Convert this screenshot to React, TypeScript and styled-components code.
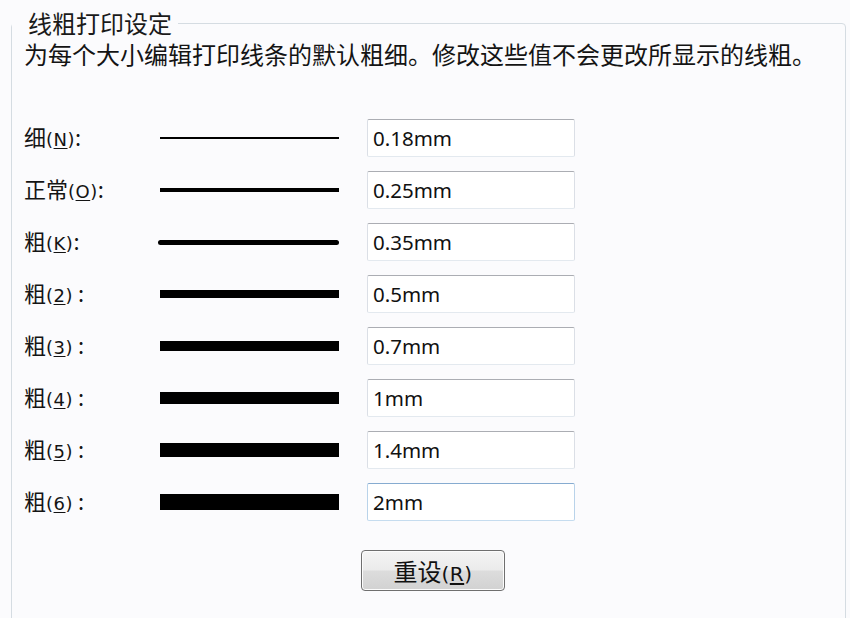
import styled, { createGlobalStyle } from "styled-components";

const GlobalStyle = createGlobalStyle`
  html, body {
    margin: 0;
    padding: 0;
    background: #fbfbfd;
  }
  body {
    font-family: "Noto Sans CJK SC", "Noto Sans", sans-serif;
    color: #141414;
  }
`;

const Page = styled.div`
  box-sizing: border-box;
  width: 850px;
  height: 618px;
  padding: 9px 0 0 11px;
  overflow: hidden;
`;

const Group = styled.fieldset`
  box-sizing: border-box;
  width: 835px;
  height: 700px;
  margin: 0;
  padding: 0 0 0 12px;
  border: 1px solid #d5dce2;
  border-radius: 4px;
`;

const Legend = styled.legend`
  margin-left: -12px;
  padding: 0 6px 0 16px;
  font-size: 24px;
  line-height: 28px;
  color: #1a1a1a;
`;

const Description = styled.p`
  margin: 4px 0 0;
  font-size: 24px;
  line-height: 26px;
  white-space: nowrap;
`;

const Rows = styled.div`
  display: flex;
  flex-direction: column;
  gap: 14px;
  margin-top: 52px;
`;

const Row = styled.div`
  display: flex;
  align-items: center;
  height: 38px;
`;

const Label = styled.label`
  width: 136px;
  font-size: 22px;
  line-height: 38px;
  white-space: nowrap;
`;

const Key = styled.span<{ $size?: number }>`
  font-family: "DejaVu Sans", sans-serif;
  font-size: ${(p) => p.$size ?? 18}px;
  letter-spacing: 0.5px;
  u {
    text-decoration: underline;
    text-underline-offset: 2px;
  }
`;

const LineCell = styled.div`
  display: flex;
  align-items: center;
  width: 179px;
  margin-right: 28px;
`;

const LineSample = styled.div<{ $weight: number; $round?: boolean }>`
  width: ${(p) => (p.$round ? 183 : 179)}px;
  margin-left: ${(p) => (p.$round ? -2 : 0)}px;
  height: ${(p) => p.$weight}px;
  background: #000;
  border-radius: ${(p) => (p.$round ? p.$weight / 2 : 0)}px;
`;

const ValueBox = styled.input<{ $focused?: boolean }>`
  box-sizing: border-box;
  width: 208px;
  height: 38px;
  margin: 0;
  padding: 0 0 0 5px;
  border: 1px solid ${(p) => (p.$focused ? "#b9d3ea" : "#dbdfe6")};
  border-top-color: ${(p) => (p.$focused ? "#86abd0" : "#abadb3")};
  border-bottom-color: ${(p) => (p.$focused ? "#c5dcef" : "#e3e9ef")};
  border-radius: 2px;
  background: #fff;
  font-family: "Noto Sans", sans-serif;
  font-size: 20.5px;
  color: #111;
  outline: none;
`;

const ButtonRow = styled.div`
  margin: 29px 0 0 337px;
`;

const ResetButton = styled.button`
  box-sizing: border-box;
  width: 144px;
  height: 41px;
  padding: 0;
  border: 1px solid #6f6f6f;
  border-radius: 4px;
  background: linear-gradient(
    to bottom,
    #f4f4f4 0%,
    #ebebeb 48%,
    #dcdcdc 52%,
    #d2d2d2 100%
  );
  box-shadow: inset 0 0 0 1px #fcfcfc;
  font-family: "Noto Sans CJK SC", sans-serif;
  font-size: 24px;
  line-height: 39px;
  color: #111;
`;

type Weight = {
  name: string;
  key: string;
  sep: string;
  value: string;
  weight: number;
  round?: boolean;
};

const weights: Weight[] = [
  { name: "细", key: "N", sep: ":", value: "0.18mm", weight: 2 },
  { name: "正常", key: "O", sep: ":", value: "0.25mm", weight: 3.5 },
  { name: "粗", key: "K", sep: ":", value: "0.35mm", weight: 5, round: true },
  { name: "粗", key: "2", sep: " :", value: "0.5mm", weight: 8 },
  { name: "粗", key: "3", sep: " :", value: "0.7mm", weight: 10 },
  { name: "粗", key: "4", sep: " :", value: "1mm", weight: 12 },
  { name: "粗", key: "5", sep: " :", value: "1.4mm", weight: 14 },
  { name: "粗", key: "6", sep: " :", value: "2mm", weight: 16 },
];

const App = () => {
  return (
    <Page>
      <GlobalStyle />
      <Group>
        <Legend>线粗打印设定</Legend>
        <Description>
          为每个大小编辑打印线条的默认粗细。修改这些值不会更改所显示的线粗。
        </Description>
        <Rows>
          {weights.map((w, idx) => (
            <Row key={w.key}>
              <Label>
                {w.name}
                <Key>
                  (<u>{w.key}</u>)
                </Key>
                {w.sep}
              </Label>
              <LineCell>
                <LineSample $weight={w.weight} $round={w.round} />
              </LineCell>
              <ValueBox
                defaultValue={w.value}
                readOnly
                $focused={idx === weights.length - 1}
              />
            </Row>
          ))}
        </Rows>
        <ButtonRow>
          <ResetButton>
            重设
            <Key $size={20}>
              (<u>R</u>)
            </Key>
          </ResetButton>
        </ButtonRow>
      </Group>
    </Page>
  );
};

export default App;
